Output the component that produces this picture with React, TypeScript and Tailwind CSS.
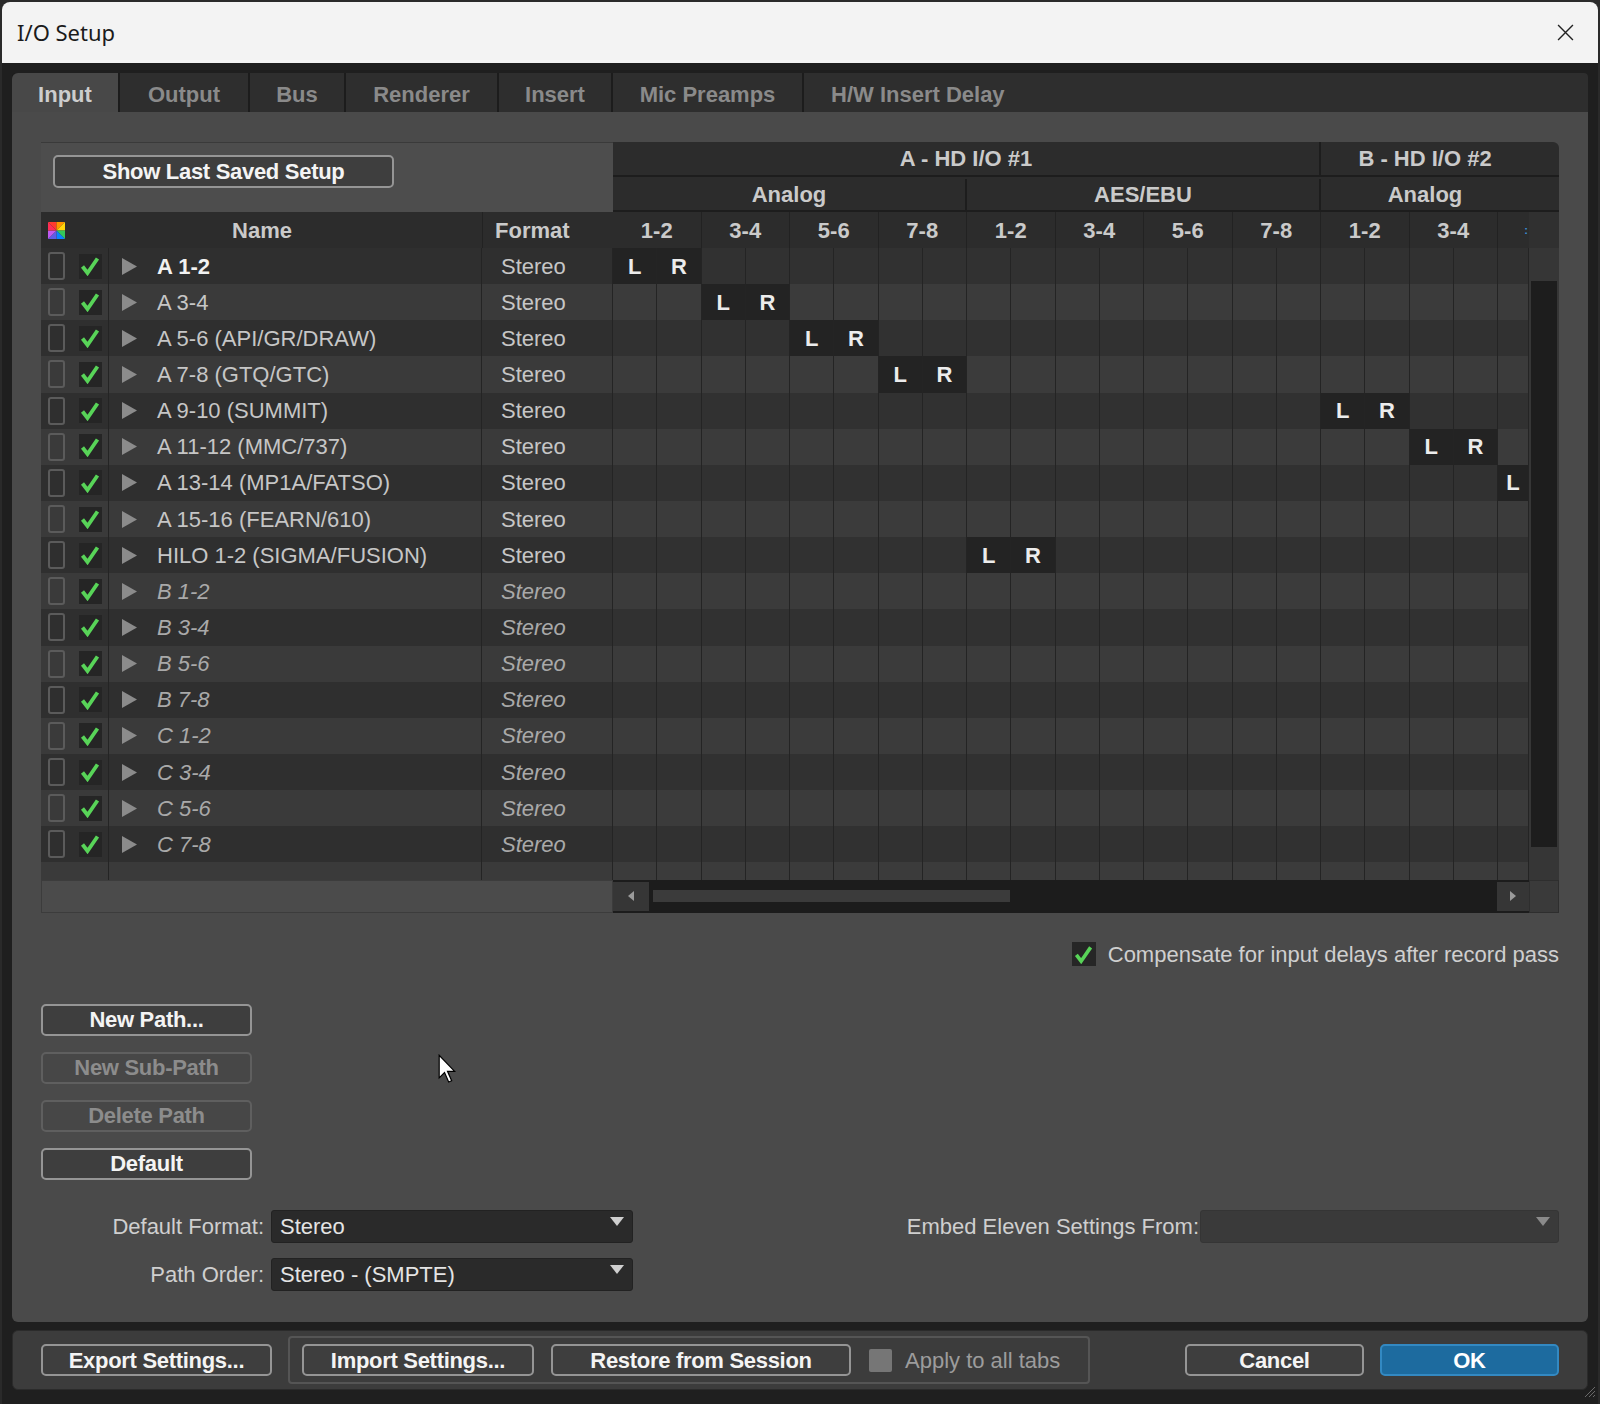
import React from "react";

type Row = { name: string; bold?: boolean; italic?: boolean; l?: number };

const rows: Row[] = [
  { name: "A 1-2", bold: true, l: 0 },
  { name: "A 3-4", l: 2 },
  { name: "A 5-6 (API/GR/DRAW)", l: 4 },
  { name: "A 7-8 (GTQ/GTC)", l: 6 },
  { name: "A 9-10 (SUMMIT)", l: 16 },
  { name: "A 11-12 (MMC/737)", l: 18 },
  { name: "A 13-14 (MP1A/FATSO)", l: 20 },
  { name: "A 15-16 (FEARN/610)" },
  { name: "HILO 1-2 (SIGMA/FUSION)", l: 8 },
  { name: "B 1-2", italic: true },
  { name: "B 3-4", italic: true },
  { name: "B 5-6", italic: true },
  { name: "B 7-8", italic: true },
  { name: "C 1-2", italic: true },
  { name: "C 3-4", italic: true },
  { name: "C 5-6", italic: true },
  { name: "C 7-8", italic: true },
];

const pairs = ["1-2", "3-4", "5-6", "7-8", "1-2", "3-4", "5-6", "7-8", "1-2", "3-4"];
const subCols = Array.from({ length: 21 }, (_, i) => i);
const tabs = ["Output", "Bus", "Renderer", "Insert", "Mic Preamps"];
const tabWidths = ["w-[128px]", "w-[94px]", "w-[151px]", "w-[112px]", "w-[189px]"];

function Check({ className = "w-[20px] h-[20px]" }: { className?: string }) {
  return (
    <svg viewBox="0 0 20 20" className={className}>
      <path d="M2.5 10.5 L7.5 17 L17.5 2.5" fill="none" stroke="#58d458" strokeWidth="3.8" strokeLinejoin="miter" />
    </svg>
  );
}

function Tri() {
  return (
    <svg viewBox="0 0 15 17" className="w-[15px] h-[17px]">
      <polygon points="0,0 15,8.5 0,17" fill="#8b8b8b" />
    </svg>
  );
}

function ColorIcon() {
  return (
    <svg viewBox="0 0 16 16" className="w-[17px] h-[17px]">
      <polygon points="0,0 8,0 8,8" fill="#ff3b2f" />
      <polygon points="8,0 16,0 8,8" fill="#ff9500" />
      <polygon points="16,0 16,8 8,8" fill="#ffd60a" />
      <polygon points="16,8 16,16 8,8" fill="#34c759" />
      <polygon points="16,16 8,16 8,8" fill="#0a84ff" />
      <polygon points="8,16 0,16 8,8" fill="#5e5ce6" />
      <polygon points="0,16 0,8 8,8" fill="#bf5af2" />
      <polygon points="0,8 0,0 8,8" fill="#ff2d55" />
    </svg>
  );
}

function Btn({
  label,
  className = "",
  disabled = false,
  primary = false,
}: {
  label: string;
  className?: string;
  disabled?: boolean;
  primary?: boolean;
}) {
  const tone = primary
    ? "bg-[#1d6b9f] border-[#3389c2] text-white"
    : disabled
      ? "bg-[#474747] border-[#5f5f5f] text-[#8c8c8c]"
      : "bg-[#3e3e3e] border-[#959595] text-[#f4f4f4]";
  return (
    <div
      className={`h-[32px] flex items-center justify-center rounded-[5px] border-2 text-[22px] tracking-[-0.3px] font-bold ${tone} ${className}`}
    >
      {label}
    </div>
  );
}

function Select({ value, className = "", dim = false }: { value: string; className?: string; dim?: boolean }) {
  return (
    <div
      className={`h-[33px] flex justify-between rounded-[3px] border ${
        dim ? "bg-[#3a3a3a] border-[#353535]" : "bg-[#2a2a2a] border-[#222222]"
      } ${className}`}
    >
      <span className="pl-[8px] leading-[31px] text-[22px] text-[#e4e4e4]">{value}</span>
      <svg viewBox="0 0 14 9" className="w-[14px] h-[9px] mt-[6px] mr-[8px]">
        <polygon points="0,0 14,0 7,9" fill={dim ? "#8a8a8a" : "#cfcfcf"} />
      </svg>
    </div>
  );
}

export default function App() {
  return (
    <div className="relative w-[1600px] h-[1404px] overflow-hidden bg-[#2a2a2a] font-['Liberation_Sans',Arial,sans-serif]">
      <div className="ml-[2px] mt-[2px] w-[1596px] h-[1402px] rounded-t-[8px] overflow-hidden bg-[#1f1f1f] flex flex-col">
        {/* title bar */}
        <div className="h-[61px] shrink-0 bg-[#f3f3f3] flex items-center justify-between pl-[15px] pr-[24px]">
          <span className="font-['Noto_Sans',sans-serif] text-[22px] text-[#1b1b1b]">I/O Setup</span>
          <svg viewBox="0 0 16 16" className="w-[17px] h-[17px]">
            <path d="M1 1 L15 15 M15 1 L1 15" stroke="#222" strokeWidth="1.3" />
          </svg>
        </div>

        <div className="px-[10px] pt-[10px] flex flex-col">
          {/* tabs */}
          <div className="h-[39px] flex bg-[#1c1c1c] gap-[2px] rounded-t-[4px]">
            <div className="w-[106px] bg-[#484848] rounded-tl-[6px] flex items-center justify-center pt-[4px] text-[22px] font-bold text-[#cdcdcd]">
              Input
            </div>
            {tabs.map((t, i) => (
              <div
                key={t}
                className={`${tabWidths[i]} bg-[#2e2e2e] flex items-center justify-center pt-[4px] text-[22px] font-bold text-[#8a8a8a]`}
              >
                {t}
              </div>
            ))}
            <div className="flex-1 bg-[#2e2e2e] rounded-tr-[4px] flex items-center pl-[27px] pt-[4px] text-[22px] font-bold text-[#8a8a8a]">
              H/W Insert Delay
            </div>
          </div>

          {/* main panel */}
          <div className="h-[1210px] bg-[#4a4a4a] rounded-b-[6px] pl-[29px] pr-[29px] pt-[30px] flex flex-col">
            {/* table */}
            <div className="w-[1518px] flex flex-col">
              {/* header */}
              <div className="flex">
                <div className="w-[572px] flex flex-col">
                  <div className="h-[70px] bg-[#4d4d4d] border-t border-[#3a3a3a] flex items-start pt-[12px] pl-[12px]">
                    <Btn label="Show Last Saved Setup" className="w-[341px] h-[33px] bg-[#3b3b3b]" />
                  </div>
                  <div className="h-[36px] bg-[#2c2c2c] flex items-center text-[22px] font-bold text-[#cacaca]">
                    <div className="w-[31px] flex justify-center">
                      <ColorIcon />
                    </div>
                    <div className="w-[410px] text-center pr-[30px]">Name</div>
                    <div className="w-[131px] h-full border-l border-[#222] flex items-center pl-[12px]">Format</div>
                  </div>
                </div>
                <div className="w-[946px] flex flex-col bg-[#2c2c2c] rounded-tr-[6px] text-[22px] font-bold text-[#cacaca]">
                  <div className="h-[35px] flex border-b-2 border-[#1d1d1d]">
                    <div className="w-[708px] flex items-center justify-center border-r-2 border-[#1d1d1d]">A - HD I/O #1</div>
                    <div className="flex-1 flex items-center justify-center pr-[30px]">B - HD I/O #2</div>
                  </div>
                  <div className="h-[35px] flex border-b-2 border-[#1d1d1d] pt-[2px]">
                    <div className="w-[354px] flex items-center justify-center border-r-2 border-[#1d1d1d]">Analog</div>
                    <div className="w-[354px] flex items-center justify-center border-r-2 border-[#1d1d1d]">AES/EBU</div>
                    <div className="flex-1 flex items-center justify-center pr-[30px]">Analog</div>
                  </div>
                  <div className="h-[36px] flex">
                    {pairs.map((p, i) => (
                      <div key={i} className="w-[88.5px] flex items-center justify-center border-r border-[#222]">
                        {p}
                      </div>
                    ))}
                    <div className="w-[31px] flex items-center justify-end pr-[1px] text-[11px] text-[#3a8fd6]">:</div>
                    <div className="w-[30px] bg-[#303030]" />
                  </div>
                </div>
              </div>

              {/* body */}
              <div className="flex">
                {/* left columns */}
                <div className="w-[572px] flex flex-col">
                  {rows.map((r, i) => {
                    const tone = r.bold
                      ? "font-bold text-[#f2f2f2]"
                      : r.italic
                        ? "italic text-[#a9a9a9]"
                        : "text-[#c6c6c6]";
                    return (
                      <div key={r.name} className={`h-[36.15px] flex ${i % 2 ? "bg-[#3a3a3a]" : "bg-[#2f2f2f]"}`}>
                        <div className="w-[31px] flex items-center justify-center">
                          <div className="w-[17px] h-[28px] rounded-[3px] border-2 border-[#5b5b5b]" />
                        </div>
                        <div className="w-[37px] flex items-center justify-center border-r border-[#242424]">
                          <div className="w-[23px] h-[25px] bg-[#252525] flex items-center justify-center">
                            <Check />
                          </div>
                        </div>
                        <div className="w-[373px] flex items-center pl-[13px] gap-[20px] border-r border-[#242424]">
                          <Tri />
                          <span className={`text-[22px] ${tone}`}>{r.name}</span>
                        </div>
                        <div className="w-[131px] flex items-center pl-[19px] border-r border-[#242424]">
                          <span className={`text-[22px] ${r.italic ? "italic text-[#a9a9a9]" : "text-[#c6c6c6]"}`}>Stereo</span>
                        </div>
                      </div>
                    );
                  })}
                  <div className="h-[17.45px] flex bg-[#3a3a3a]">
                    <div className="w-[68px] border-r border-[#242424]" />
                    <div className="w-[373px] border-r border-[#242424]" />
                    <div className="w-[131px] border-r border-[#242424]" />
                  </div>
                </div>

                {/* matrix */}
                <div className="w-[916px] flex flex-col">
                  {rows.map((r, i) => (
                    <div key={r.name} className={`h-[36.15px] flex ${i % 2 ? "bg-[#3b3b3b]" : "bg-[#313131]"}`}>
                      {subCols.map((c) => {
                        const isL = r.l !== undefined && c === r.l;
                        const isR = r.l !== undefined && c === r.l + 1;
                        return (
                          <div
                            key={c}
                            className={`${c === 20 ? "w-[31px]" : "w-[44.25px]"} flex items-center justify-center border-r border-[#242424] text-[22px] font-bold text-[#ececec] ${
                              isL || isR ? "bg-[#232323]" : ""
                            }`}
                          >
                            {isL ? "L" : isR ? "R" : ""}
                          </div>
                        );
                      })}
                    </div>
                  ))}
                  <div className="h-[17.45px] flex bg-[#3b3b3b]">
                    {subCols.map((c) => (
                      <div key={c} className={`${c === 20 ? "w-[31px]" : "w-[44.25px]"} border-r border-[#242424]`} />
                    ))}
                  </div>
                </div>

                {/* vertical scrollbar */}
                <div className="w-[30px] bg-[#363636] flex flex-col pt-[33px] px-[2px]">
                  <div className="h-[566px] bg-[#1d1d1d]" />
                </div>
              </div>

              {/* horizontal scrollbar */}
              <div className="h-[33px] flex">
                <div className="w-[572px] bg-[#4b4b4b] border border-[#3c3c3c]" />
                <div className="w-[916px] flex bg-[#1c1c1c] py-[2px]">
                  <div className="w-[36px] bg-[#363636] flex items-center justify-center">
                    <svg viewBox="0 0 6 10" className="w-[6px] h-[10px]">
                      <polygon points="6,0 0,5 6,10" fill="#9a9a9a" />
                    </svg>
                  </div>
                  <div className="flex-1 flex items-center pl-[4px]">
                    <div className="w-[357px] h-[12px] bg-[#3b3b3b]" />
                  </div>
                  <div className="w-[32px] bg-[#363636] flex items-center justify-center">
                    <svg viewBox="0 0 6 10" className="w-[6px] h-[10px]">
                      <polygon points="0,0 6,5 0,10" fill="#9a9a9a" />
                    </svg>
                  </div>
                </div>
                <div className="w-[30px] bg-[#3a3a3a] border border-[#2e2e2e]" />
              </div>
            </div>

            {/* compensate */}
            <div className="mt-[25px] flex justify-end items-center gap-[12px]">
              <div className="w-[24px] h-[24px] bg-[#262626] flex items-center justify-center">
                <Check className="w-[19px] h-[19px]" />
              </div>
              <span className="text-[22px] text-[#cfcfcf]">Compensate for input delays after record pass</span>
            </div>

            {/* path buttons */}
            <div className="mt-[33px] flex flex-col gap-[16px]">
              <Btn label="New Path..." className="w-[211px]" />
              <Btn label="New Sub-Path" className="w-[211px]" disabled />
              <Btn label="Delete Path" className="w-[211px]" disabled />
              <Btn label="Default" className="w-[211px]" />
            </div>

            {/* formats */}
            <div className="mt-[30px] flex justify-between">
              <div className="flex flex-col gap-[15px]">
                <div className="flex items-center gap-[7px]">
                  <span className="w-[223px] text-right text-[22px] text-[#cfcfcf]">Default Format:</span>
                  <Select value="Stereo" className="w-[362px]" />
                </div>
                <div className="flex items-center gap-[7px]">
                  <span className="w-[223px] text-right text-[22px] text-[#cfcfcf]">Path Order:</span>
                  <Select value="Stereo - (SMPTE)" className="w-[362px]" />
                </div>
              </div>
              <div className="flex items-start">
                <div className="flex items-center gap-[1px]">
                  <span className="text-[22px] text-[#cfcfcf]">Embed Eleven Settings From:</span>
                  <Select value="" className="w-[359px]" dim />
                </div>
              </div>
            </div>
          </div>

          {/* bottom bar */}
          <div className="mt-[8px] h-[60px] bg-[#3c3c3c] rounded-[6px] border border-[#2b2b2b] flex items-center pl-[28px] pr-[28px]">
            <Btn label="Export Settings..." className="w-[231px]" />
            <div className="ml-[16px] h-[48px] w-[802px] border-2 border-[#555] rounded-[4px] flex items-center pl-[12px]">
              <Btn label="Import Settings..." className="w-[232px]" />
              <Btn label="Restore from Session" className="ml-[17px] w-[300px]" />
              <div className="ml-[18px] w-[23px] h-[23px] rounded-[2px] bg-[#767676]" />
              <span className="ml-[13px] text-[22px] text-[#9c9c9c]">Apply to all tabs</span>
            </div>
            <div className="flex-1" />
            <Btn label="Cancel" className="w-[179px]" />
            <Btn label="OK" className="ml-[16px] w-[179px]" primary />
          </div>
        </div>
      </div>

      {/* resize grip */}
      <svg viewBox="0 0 14 14" className="absolute left-[1582px] top-[1384px] w-[14px] h-[14px]">
        <path d="M13 3 L3 13 M13 7 L7 13 M13 11 L11 13" stroke="#6a6a6a" strokeWidth="1" />
      </svg>

      {/* mouse pointer */}
      <svg viewBox="0 0 16 26" className="absolute left-[438px] top-[1054px] w-[19px] h-[31px]">
        <path d="M1 1 L1 20 L5.5 15.5 L9 23.5 L11.5 22.5 L8 14.5 L14 14.5 Z" fill="#ffffff" stroke="#000" strokeWidth="1" />
      </svg>
    </div>
  );
}
